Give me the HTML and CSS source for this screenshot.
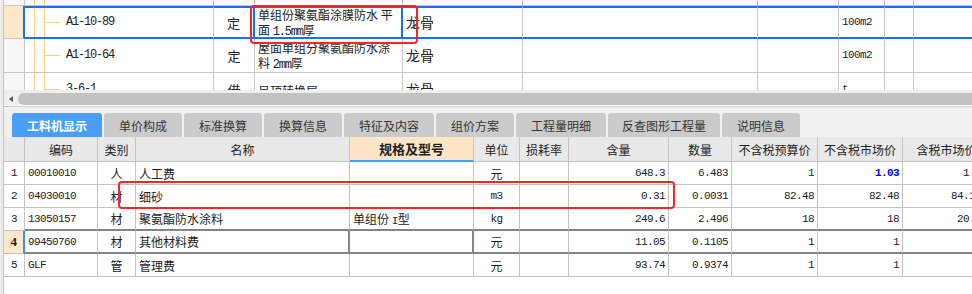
FILE: index.html
```html
<!DOCTYPE html>
<html lang="zh-CN">
<head>
    <meta charset="UTF-8">
    <title>工料机显示</title>
    <link rel="stylesheet" href="styles.css">
</head>
<body>
<div class="app">

    <div class="top-grid">
        <div class="trow partial">
            <div class="tc hdr"></div>
            <div class="tc code"></div>
            <div class="tc type"></div>
            <div class="tc name"></div>
            <div class="tc spec"></div>
            <div class="tc c6"></div>
            <div class="tc c7"></div>
            <div class="tc unit"></div>
            <div class="tc c9"></div>
            <div class="tc c10"></div>
        </div>
        <div class="trow sel">
            <div class="tc hdr"></div>
            <div class="tc code branch"><span class="mono">A1-10-89</span></div>
            <div class="tc type">定</div>
            <div class="tc name current"><div class="txt">单组份聚氨酯涂膜防水 平<br>面 <span class="mono">1.5mm</span>厚</div></div>
            <div class="tc spec">龙骨</div>
            <div class="tc c6"></div>
            <div class="tc c7"></div>
            <div class="tc unit mono">100m2</div>
            <div class="tc c9"></div>
            <div class="tc c10"></div>
        </div>
        <div class="trow">
            <div class="tc hdr"></div>
            <div class="tc code branch"><span class="mono">A1-10-64</span></div>
            <div class="tc type">定</div>
            <div class="tc name"><div class="txt">屋面单组分聚氨酯防水涂<br>料 <span class="mono">2mm</span>厚</div></div>
            <div class="tc spec">龙骨</div>
            <div class="tc c6"></div>
            <div class="tc c7"></div>
            <div class="tc unit mono">100m2</div>
            <div class="tc c9"></div>
            <div class="tc c10"></div>
        </div>
        <div class="trow">
            <div class="tc hdr"></div>
            <div class="tc code branch"><span class="mono">3-6-1</span></div>
            <div class="tc type">借</div>
            <div class="tc name">吊顶转换层</div>
            <div class="tc spec">龙骨</div>
            <div class="tc c6"></div>
            <div class="tc c7"></div>
            <div class="tc unit mono">t</div>
            <div class="tc c9"></div>
            <div class="tc c10"></div>
        </div>
    </div>

    <div class="hscroll">
        <span class="arrow"></span>
        <span class="thumb"></span>
    </div>

    <div class="tabs">
        <div class="tab active w90">工料机显示</div>
        <div class="tab w78">单价构成</div>
        <div class="tab w78">标准换算</div>
        <div class="tab w78">换算信息</div>
        <div class="tab w90">特征及内容</div>
        <div class="tab w78">组价方案</div>
        <div class="tab w90">工程量明细</div>
        <div class="tab w112">反查图形工程量</div>
        <div class="tab w78">说明信息</div>
    </div>

    <div class="grid">
        <div class="grow head">
            <div class="gc num"></div>
            <div class="gc gcode">编码</div>
            <div class="gc gtype">类别</div>
            <div class="gc gname">名称</div>
            <div class="gc gspec focus">规格及型号</div>
            <div class="gc gunit">单位</div>
            <div class="gc gloss">损耗率</div>
            <div class="gc gper">含量</div>
            <div class="gc gqty">数量</div>
            <div class="gc gbud">不含税预算价</div>
            <div class="gc gmkt">不含税市场价</div>
            <div class="gc gtax">含税市场价</div>
        </div>
        <div class="grow">
            <div class="gc num mono">1</div>
            <div class="gc gcode mono">00010010</div>
            <div class="gc gtype">人</div>
            <div class="gc gname">人工费</div>
            <div class="gc gspec"></div>
            <div class="gc gunit">元</div>
            <div class="gc gloss"></div>
            <div class="gc gper mono">648.3</div>
            <div class="gc gqty mono">6.483</div>
            <div class="gc gbud mono">1</div>
            <div class="gc gmkt mono changed">1.03</div>
            <div class="gc gtax mono">1.03</div>
        </div>
        <div class="grow">
            <div class="gc num mono">2</div>
            <div class="gc gcode mono">04030010</div>
            <div class="gc gtype">材</div>
            <div class="gc gname">细砂</div>
            <div class="gc gspec"></div>
            <div class="gc gunit mono">m3</div>
            <div class="gc gloss"></div>
            <div class="gc gper mono">0.31</div>
            <div class="gc gqty mono">0.0031</div>
            <div class="gc gbud mono">82.48</div>
            <div class="gc gmkt mono">82.48</div>
            <div class="gc gtax mono">84.128</div>
        </div>
        <div class="grow above-sel">
            <div class="gc num mono">3</div>
            <div class="gc gcode mono">13050157</div>
            <div class="gc gtype">材</div>
            <div class="gc gname">聚氨酯防水涂料</div>
            <div class="gc gspec"><div class="txt">单组份 <span class="mono">I</span>型</div></div>
            <div class="gc gunit mono">kg</div>
            <div class="gc gloss"></div>
            <div class="gc gper mono">249.6</div>
            <div class="gc gqty mono">2.496</div>
            <div class="gc gbud mono">18</div>
            <div class="gc gmkt mono">18</div>
            <div class="gc gtax mono">20.34</div>
        </div>
        <div class="grow sel">
            <div class="gc num mono">4</div>
            <div class="gc gcode mono">99450760</div>
            <div class="gc gtype">材</div>
            <div class="gc gname">其他材料费</div>
            <div class="gc gspec"></div>
            <div class="gc gunit">元</div>
            <div class="gc gloss"></div>
            <div class="gc gper mono">11.05</div>
            <div class="gc gqty mono">0.1105</div>
            <div class="gc gbud mono">1</div>
            <div class="gc gmkt mono">1</div>
            <div class="gc gtax mono">1</div>
        </div>
        <div class="grow">
            <div class="gc num mono">5</div>
            <div class="gc gcode mono">GLF</div>
            <div class="gc gtype">管</div>
            <div class="gc gname">管理费</div>
            <div class="gc gspec"></div>
            <div class="gc gunit">元</div>
            <div class="gc gloss"></div>
            <div class="gc gper mono">93.74</div>
            <div class="gc gqty mono">0.9374</div>
            <div class="gc gbud mono">1</div>
            <div class="gc gmkt mono">1</div>
            <div class="gc gtax mono">1</div>
        </div>
    </div>

    <!-- red annotation boxes drawn over the grids -->
    <div class="mark mark-name"></div>
    <div class="mark mark-row"></div>
</div>
</body>
</html>
```

FILE: styles.css
```css
body {
    margin: 0;
    width: 972px;
    height: 294px;
    overflow: hidden;
    background-color: #ececec;
    font-family: "Noto Sans CJK SC", "Noto Sans", sans-serif;
    font-size: 12px;
    color: #222;
}
.app {
    position: relative;
    margin-left: 3px;
    width: 968px;
    height: 294px;
    overflow: hidden;
    border-left: 1px solid #c4c4c4;
    background-color: #fff;
    display: flex;
    flex-direction: column;
}
.mono {
    font-family: "Liberation Mono", "DejaVu Sans Mono", monospace;
    font-size: 11px;
    letter-spacing: -0.6px;
}
.txt {
    white-space: pre;
}

/* upper grid */
.top-grid {
    height: 90px;
    flex-shrink: 0;
    overflow: hidden;
}
.trow {
    display: flex;
    height: 34px;
    border-bottom: 1px solid #c8c8c8;
    box-sizing: border-box;
}
.trow.partial {
    height: 6px;
}
.trow.sel {
    height: 33px;
    border-bottom: none;
}
.tc {
    flex-shrink: 0;
    box-sizing: border-box;
    border-right: 1px solid #c8c8c8;
    display: flex;
    align-items: center;
    padding: 0 3px;
    white-space: nowrap;
    overflow: hidden;
    line-height: 15px;
}
.tc.hdr { width: 21px; background-color: #f7f7f7; }
.tc.code {
    width: 189px;
    padding-left: 41px;
    background:
        linear-gradient(#fbcf85, #fbcf85) 9px 0 / 1px 100% no-repeat,
        linear-gradient(#fbcf85, #fbcf85) 19px 0 / 1px 100% no-repeat;
}
.tc.code.branch {
    background:
        linear-gradient(#fbcf85, #fbcf85) 9px 0 / 1px 100% no-repeat,
        linear-gradient(#fbcf85, #fbcf85) 19px 0 / 1px 100% no-repeat,
        linear-gradient(#fbcf85, #fbcf85) 20px 50% / 15px 1px no-repeat;
}
.tc.code .mono { font-size: 12px; letter-spacing: -1.2px; }
.tc.type { width: 41px; justify-content: center; font-size: 13px; }
.tc.name { width: 148px; padding-top: 1px; }
.tc.name .txt { line-height: 15px; }
.tc.name .mono { font-size: 12px; letter-spacing: -1.2px; }
.tc.spec { width: 120px; font-size: 14px; }
.tc.c6 { width: 235px; }
.tc.c7 { width: 81px; }
.tc.unit { width: 46px; }
.tc.c9 { width: 29px; }
.tc.c10 { width: 80px; }

.trow.sel .tc { border-top: 2px solid #1670f0; border-bottom: 2px solid #1670f0; }
.trow.sel .tc.hdr {
    border-top: none;
    border-bottom: 1px solid #c8c8c8;
    border-right: 2px solid #1670f0;
    background-color: #fde8c9;
}
.trow.sel .tc.type { border-right: 2px solid #1670f0; }
.trow.sel .tc.current { border-right: 2px solid #1670f0; }

/* horizontal scrollbar */
.hscroll {
    height: 17px;
    flex-shrink: 0;
    box-sizing: border-box;
    background-color: #efefef;
    border-bottom: 1px solid #cacaca;
    box-shadow: inset 0 -1px #fff;
    display: flex;
    align-items: flex-start;
    padding: 3px 0 0 5px;
}
.arrow {
    margin-top: 3px;
    width: 0;
    height: 0;
    border-top: 3px solid transparent;
    border-bottom: 3px solid transparent;
    border-right: 4px solid #555;
}
.thumb {
    margin-left: 5px;
    flex: 1;
    height: 12px;
    border-radius: 6px 0 0 6px;
    background-color: #c2c2c2;
}

/* tab strip */
.tabs {
    height: 30px;
    flex-shrink: 0;
    box-sizing: border-box;
    padding: 6px 0 0 8px;
    display: flex;
    gap: 2px;
    background-color: #f0f0f0;
}
.tab {
    flex-shrink: 0;
    height: 24px;
    border-radius: 3px 3px 0 0;
    background-color: #cbcbcb;
    color: #333;
    display: flex;
    align-items: center;
    justify-content: center;
    font-size: 12px;
}
.tab.active {
    background-color: #4a9ef7;
    color: #fff;
    font-weight: bold;
}
.w78 { width: 78px; }
.w90 { width: 90px; }
.w112 { width: 112px; }

/* lower grid */
.grid {
    flex: 1;
}
.grow {
    display: flex;
    height: 23px;
}
.grow.head {
    height: 25px;
    background-color: #e9e9e9;
}
.gc {
    flex-shrink: 0;
    box-sizing: border-box;
    height: 100%;
    border-right: 1px solid #c4c4c4;
    border-bottom: 1px solid #c4c4c4;
    display: flex;
    align-items: center;
    padding: 0 3px;
    white-space: nowrap;
    overflow: hidden;
}
.head .gc { justify-content: center; }
.head .gc.focus {
    background-color: #fde6c6;
    border-bottom: 2px solid #4a9ef7;
    font-weight: bold;
    font-size: 13px;
}
.gc.num { width: 21px; justify-content: center; }
.gc.gcode { width: 73px; }
.gc.gtype { width: 38px; justify-content: center; }
.gc.gname { width: 214px; }
.gc.gspec { width: 124px; }
.gc.gunit { width: 46px; justify-content: center; }
.gc.gloss { width: 49px; }
.gc.gper { width: 100px; justify-content: flex-end; }
.gc.gqty { width: 63px; justify-content: flex-end; }
.gc.gbud { width: 86px; justify-content: flex-end; }
.gc.gmkt { width: 85px; justify-content: flex-end; }
.gc.gtax { width: 88px; justify-content: flex-end; }
.head .gc.gper,
.head .gc.gqty,
.head .gc.gbud,
.head .gc.gmkt,
.head .gc.gtax { justify-content: center; }
.gc.changed {
    color: #0000f0;
    font-weight: bold;
}

.grow.above-sel .gc + .gc { border-bottom: 2px solid #858585; }
.grow.sel .gc + .gc { border-bottom: 2px solid #858585; }
.grow.sel .gc.num {
    background-color: #fde8c9;
    border-right: 2px solid #3d8ef0;
    font-weight: bold;
    font-family: "Liberation Serif", serif;
    font-size: 13px;
}
.grow.sel .gc.gname,
.grow.sel .gc.gspec { border-right: 2px solid #858585; }

/* annotations */
.mark {
    position: absolute;
    box-sizing: border-box;
    border: 2px solid #f42626;
    border-radius: 4px;
    pointer-events: none;
}
.mark-name {
    left: 246px;
    top: 5px;
    width: 168px;
    height: 39px;
}
.mark-row {
    left: 114px;
    top: 181px;
    width: 557px;
    height: 28px;
}
```
